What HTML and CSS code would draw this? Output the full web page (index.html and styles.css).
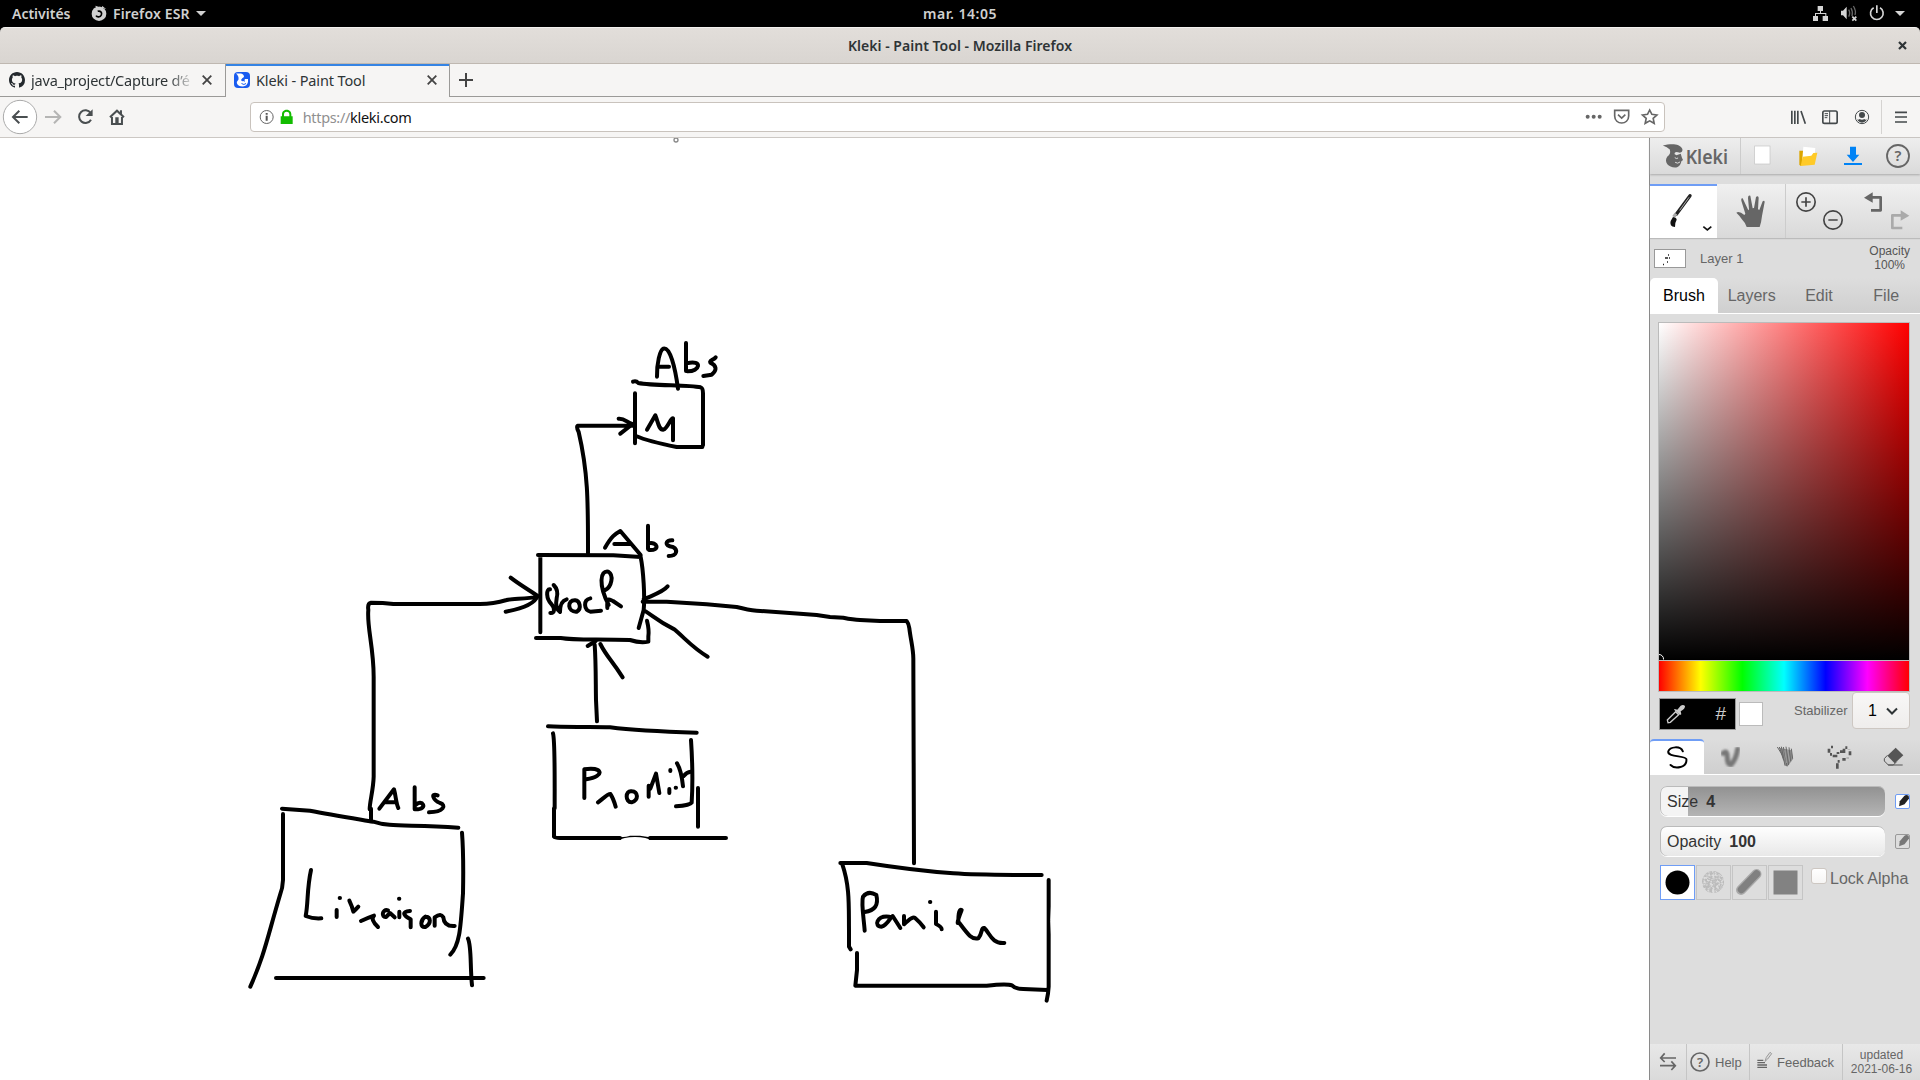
FILE: index.html
```html
<!DOCTYPE html>
<html lang="fr">
<head>
<meta charset="utf-8">
<title>Kleki - Paint Tool</title>
<link rel="stylesheet" href="styles.css">
</head>
<body>
<header class="topbar">
  <div class="topbar-left">
    <span class="activities">Activités</span>
    <svg class="fox" viewBox="273 15 48 50"><circle cx="297" cy="41" r="22" fill="#d0d0d0"/><path d="M272 14h50v9l-8 4-14-8-12 5-6-8-10 7z" fill="#000"/><path d="M286 17l4 12 11 1-8 7 1 6 11-1c-1 6-10 9-15 4 3 8 20 8 23-4 2-9-4-15-10-16l4-8 12 10" fill="#d0d0d0"/><path d="M293 34c8-3 14 4 11 11-3 7-13 7-16 2" fill="none" stroke="#000" stroke-width="5"/></svg>
    <span class="app">Firefox ESR</span><i class="caret"></i>
  </div>
  <span class="clock">mar. 14:05</span>
  <svg class="tray" viewBox="750 0 300 81" fill="#d5d5d5"><path d="M773 18h16v15h-6v6h16v9h5v15h-16V48h8v-6h-28v6h6v15h-15V48h6v-9h15v-6h-7z"/><path d="M843 32h6l11-12v38l-11-12h-6z"/><g fill="none" stroke="#666" stroke-width="4"><path d="M866 29q6 10 0 21M873 24q7 13 3 25M880 18q9 14 5 27"/></g><path d="M877 50l12 12M889 50l-12 12" stroke="#d5d5d5" stroke-width="5"/><g fill="none" stroke="#d5d5d5" stroke-width="5"><path d="M941 23a19 19 0 1 0 19 0M950.500 16v23"/></g><path d="M1005 33h30l-15 15z"/></svg>
</header>
<div class="titlebar"><span class="title">Kleki - Paint Tool - Mozilla Firefox</span>
  <svg class="winclose" viewBox="0 0 9 9"><path d="M1 1l7 7M8 1L1 8" stroke="#2e3436" stroke-width="2.200"/></svg>
</div>
<nav class="tabs">
  <div class="tab">
    <svg class="fav" viewBox="0 0 16 16"><path fill="#24292e" d="M8 0C3.580 0 0 3.580 0 8c0 3.540 2.290 6.530 5.470 7.590.4.070.55-.17.55-.38 0-.19-.01-.82-.01-1.490-2.010.37-2.530-.49-2.690-.94-.09-.23-.48-.94-.82-1.130-.28-.15-.68-.52-.01-.53.63-.01 1.080.58 1.230.82.72 1.210 1.870.87 2.330.66.07-.52.28-.87.51-1.070-1.780-.2-3.640-.89-3.640-3.950 0-.87.31-1.590.82-2.150-.08-.2-.36-1.020.08-2.120 0 0 .67-.21 2.200.82.640-.18 1.320-.27 2-.27s1.360.09 2 .27c1.530-1.040 2.200-.82 2.200-.82.440 1.100.160 1.920.080 2.120.510.560.820 1.270.820 2.150 0 3.070-1.870 3.750-3.650 3.950.290.250.540.730.540 1.480 0 1.070-.01 1.930-.01 2.200 0 .21.150.460.550.380A8 8 0 0 0 16 8c0-4.420-3.580-8-8-8z"/></svg>
    <span class="tab-label fade">java_project/Capture d’é</span>
    <svg class="x" viewBox="0 0 10 10"><path d="M.7.7l8.600 8.600M9.300.7L.7 9.300"/></svg>
  </div>
  <div class="tab active">
    <svg class="fav" viewBox="0 0 16 16"><rect width="16" height="16" rx="4" fill="#1a5cf0"/><path d="M2 1.500h5Q10 2 10 5q-2 1-3 3 1 2 3 1l1-2h3v3q-1 4-5 4.500-5 0-6-3-.5-2 1.500-4Q5 4 2 1.500z" fill="#fff"/><path d="M10.500 8.500v1M7.500 11.500q2.500 2 4.500 0" stroke="#1a5cf0" fill="none"/></svg>
    <span class="tab-label">Kleki - Paint Tool</span>
    <svg class="x" viewBox="0 0 10 10"><path d="M.7.7l8.600 8.600M9.300.7L.7 9.300"/></svg>
  </div>
  <div class="newtab"><svg class="plus" viewBox="0 0 14 14"><path d="M7 0v14M0 7h14"/></svg></div>
</nav>
<div class="navbar">
  <svg class="navicons" viewBox="0 291 400 120"><circle cx="60" cy="351" r="50" fill="#fff" stroke="#aaa" stroke-width="3"/><g fill="none" stroke="#4a4f51" stroke-width="6"><path d="M83 351H39M58 332l-19 19 19 19"/><path d="M135 351h44M162 332l19 19-19 19" stroke="#b5b5b4"/><path d="M272 339a19 19 0 1 0 1 20"/></g><path d="M278 328v20h-21z" fill="#4a4f51"/><path d="M330 352l21-20 21 20M336 351v21h30v-21" fill="none" stroke="#4a4f51" stroke-width="6"/><path d="M346 352h10v20h-10zM360 331h6v14h-6z" fill="#4a4f51"/></svg>
  <div class="urlbar">
    <svg class="urlicons" viewBox="775 328 110 48"><circle cx="801" cy="352" r="19.500" fill="none" stroke="#666" stroke-width="3"/><path d="M798 348h6v15h-6zM798 340h6v5h-6z" fill="#555"/><path d="M843 350h4v-6c0-18 28-18 28 0v6h4v23h-36zm10 0h16v-6c0-10-16-10-16 0z" fill="#12bc00"/></svg>
    <span class="url"><span class="scheme">https://</span>kleki.com</span>
    <svg class="urlact" viewBox="70 325 230 54"><g fill="#666"><circle cx="84" cy="351" r="6"/><circle cx="102" cy="351" r="6"/><circle cx="120" cy="351" r="6"/></g><g fill="none" stroke="#666" stroke-width="5"><path d="M165 332h42v17c0 28-42 28-42 0zM175 345l11 10 11-10"/><path d="M270 331l6.500 13 15 2-11 10 3 15-13.500-7.500-13.500 7.500 3-15-11-10 15-2z"/></g></svg>
  </div>
  <svg class="menuicons" viewBox="690 294 360 114"><g fill="none" stroke="#44494b" stroke-width="5"><path d="M695.500 332v40M704.500 332v40M713.500 332v40M723 333l13 38"/><rect x="788.500" y="333" width="43" height="37" rx="5"/><path d="M809 333v38" stroke-width="3"/><path d="M794 341h10M794 347h10M794 353h8" stroke-width="3"/><circle cx="906" cy="351" r="20" stroke-width="3"/><path d="M1005 337h36M1005 351h36M1005 366h36"/></g><circle cx="906" cy="345" r="9" fill="#44494b"/><path d="M891 358q4 3 8-1 7 4 14 0 4 4 8 1-6 10-15 10t-15-10z" fill="#44494b"/><path d="M964.500 300v102" stroke="#d5d3d1" stroke-width="3"/></svg>
</div>
<main class="main">
  <svg class="canvas" viewBox="0 138 1649 942" fill="none" stroke="#000" stroke-width="12" stroke-linecap="round" stroke-linejoin="round">
    <circle cx="676" cy="140" r="2" stroke="#888" stroke-width="1.300"/>
    <!-- M and Stock boxes -->
    <g transform="translate(530 330) scale(.33333)">
      <path d="M381 140C380 100 390 60 400 56C420 50 435 110 444 176M387 110h30M468 39v84M470 100C520 88 510 125 472 124M557 82C550 90 537 92 541 98C560 107 562 120 545 134L520 138"/>
      <path d="M309 155Q318 151 325 159C370 168 470 164 512 172Q519 174 519 190V346M315 190V340M318 318C350 332 400 343 440 351H517M351 299L376 256C384 275 386 300 400 299C412 296 423 262 429 265V331"/>
      <path d="M266 266C285 264 293 281 308 282L271 311M308 287H143Q138 290 146 306C175 430 174 520 174 670"/>
      <path d="M225 653C245 618 255 612 271 603L332 675M253 642h48M354 587v70M356 640C382 634 392 663 357 660M427 631C405 630 402 648 429 651C444 659 442 678 416 678"/>
      <path d="M24 675L250 676 332 681C340 720 345 800 341 840L326 894M31 682V907M18 924H92C130 931 200 927 300 930Q330 940 355 935V920Q358 900 351 872"/>
      <path d="M60 778C48 776 48 806 64 822C76 836 74 850 61 849M71 765C82 776 84 790 80 805C76 825 80 838 90 846C90 825 94 812 110 808M136 811C110 809 112 847 140 845C157 835 148 812 136 811M181 805C158 810 162 840 181 845L213 842M236 825C205 765 210 720 235 725C252 735 245 770 226 780M232 834C230 800 236 808 249 813L273 829"/>
      <path d="M413 769C400 786 370 795 341 808M347 844C375 862 380 872 433 898C470 930 490 955 533 980M194 944C198 1000 197 1060 198 1110L201 1174M197 933L173 948M211 942C230 980 245 990 278 1042"/>
    </g>
    <!-- Livraison box -->
    <g transform="translate(240 560) scale(.33333)">
      <path d="M812 53C840 75 860 85 893 108Q880 140 797 155M893 110C860 118 815 115 800 120Q760 132 720 132H460Q430 128 393 128Q382 130 385 150C380 200 401 260 401 350V650C400 690 389 725 389 748"/>
      <path d="M393 746V782M126 746L210 752C270 764 340 775 400 785C450 802 500 793 655 803M129 762V960Q128 985 120 1005C80 1140 75 1180 31 1280M108 1254H731M666 818C670 870 670 950 669 1000C662 1100 660 1155 631 1184M684 1136C695 1160 690 1220 696 1276"/>
      <path d="M418 746L462 688C468 710 468 730 475 744M435 727h35M524 682V748M527 735C545 714 568 748 527 748M593 706C570 698 580 721 600 729C620 735 612 756 567 757"/>
      <path d="M213 930C200 990 205 1030 197 1068Q220 1077 244 1075M290 1050V1071M299 1014h1M328 1022Q337 1041 340 1055Q348 1048 355 1040M363 1083Q380 1075 402 1067Q390 1078 414 1101M444 1051C425 1046 424 1074 438 1071L450 1059L464 1072M478 1055V1072M477 1016h1M510 1053C482 1055 492 1068 512 1078V1102M556 1070C540 1080 540 1104 556 1101C575 1090 573 1070 556 1070M584 1097V1072C598 1062 605 1064 610 1072Q612 1100 644 1098"/>
    </g>
    <!-- Produit box -->
    <g transform="translate(530 640) scale(.33333)">
      <path d="M54 259C120 263 190 259 240 262C300 270 350 274 500 278M69 280C75 300 74 370 74 505H72V590Q75 594 90 594H270M360 594H588M483 300C487 360 488 440 485 488Q480 496 438 499M504 444V560"/>
      <path d="M270 592Q292 590 300 587H330Q345 589 360 592V600H270Z" fill="#000" stroke="none"/>
      <ellipse cx="315" cy="601" rx="43" ry="10" fill="#fff" stroke="none"/>
      <path d="M163 474V388C215 378 230 408 169 418M204 487C220 475 235 460 241 462Q250 475 257 500M305 454C285 450 285 488 305 487C327 482 325 453 305 454M356 470V437L361 446 378 401 388 459M421 390v3M418 447v12M437 443h1M441 370C453 390 456 410 459 439M461 408Q470 396 482 395"/>
    </g>
    <!-- Panier connector -->
    <g transform="translate(640 560) scale(.33333)">
      <path d="M8 125H80L200 133 290 141Q325 150 350 152L480 161 530 165 570 171 610 173Q640 179 660 180L720 183H800Q806 190 808 205C812 240 821 270 820 300L822 910"/>
    </g>
    <!-- Panier box -->
    <g transform="translate(820 840) scale(.33333)">
      <path d="M61 69H140C210 80 320 94 400 100C480 106 550 104 665 105M67 73C90 140 86 200 87 270V320L92 328M111 339V390L106 437H500Q560 430 576 436Q586 447 610 447L682 450M686 120V440Q685 460 680 482"/>
      <path d="M134 272C132 240 123 190 129 170Q145 150 169 165Q180 210 134 216M208 230C170 225 160 260 185 260C205 252 210 232 218 228L241 264M252 228V253Q280 225 286 235Q298 245 311 262M330 186h1M348 215V252Q365 260 365 268M413 249Q413 240 425 210Q415 205 415 245C445 285 455 300 475 295C490 275 482 262 493 264C510 280 515 312 553 309"/>
    </g>
    <path d="M1051.500 906Q1050 920 1051.500 935" stroke="#fff" stroke-width="1"/>
  </svg>
  <aside class="panel">
    <div class="head">
      <svg class="logo" viewBox="30 24 271 108"><path d="M69 46C90 41 120 38 128 57Q130 66 120 68Q104 63 104 72L110 76 123 71 127 84 130 90 125 94Q123 108 112 112C90 116 70 98 82 80Q94 72 90 58 82 50 69 46z" fill="#666"/><path d="M105 83q6 5 10 1M106 97q8 6 15-1" fill="none" stroke="#ddd" stroke-width="3"/><text x="138" y="101" font-size="58" textLength="128" lengthAdjust="spacingAndGlyphs" class="logotext">Kleki</text></svg>
      <svg class="fileicons" viewBox="303 24 537 108"><rect x="344" y="48" width="46" height="54" fill="#fff" stroke="#c4c4c4" stroke-width="2"/><path d="M478 62h12v40l-8 6-4-4z" fill="#dba500"/><path d="M490 50l36 4-4 45-36 2z" fill="#fff"/><path d="M488 80l26-3 6-8 12-1-8 36-42 4z" fill="#ffca28"/><path d="M630 50h18v24h10l-19 22-19-22h10z" fill="#0083f5"/><path d="M612 102h54" stroke="#0083f5" stroke-width="6"/><circle cx="774" cy="78" r="33" fill="none" stroke="#666" stroke-width="5.500"/><text x="774" y="94" text-anchor="middle" font-size="45" class="q">?</text></svg>
    </div>
    <div class="tools">
      <div class="brushtool"><svg class="fill" viewBox="30 168 201 156"><path d="M150 197L109 253" stroke="#222" stroke-width="10" stroke-linecap="round"/><path d="M147 202l-28 39" stroke="#aaa" stroke-width="3"/><path d="M108 251l-7 10" stroke="#aaa" stroke-width="10"/><path d="M99 261q11 2 11 8-6 10-5 22-18-1-13-18z" fill="#111"/><path d="M190 290l12 10 12-10" fill="none" stroke="#111" stroke-width="5"/></svg></div>
      <svg class="handtool" viewBox="231 162 204 162"><path d="M320 291q-4-13-15-24-8-12-16-19 8-7 24 7l3-4-12-39q-2-8 4-7l17 36 2-3-3-34q0-9 7-7l7 38 4-1 6-33q6-5 8 2l-2 35 4 2 10-26q5-5 6 2l-8 42q-2 19-7 33z" fill="#666"/></svg>
      <svg class="viewtools" viewBox="438 162 402 162"><g fill="none" stroke="#444" stroke-width="5"><circle cx="498" cy="216" r="27.500"/><circle cx="579" cy="270" r="27.500"/><path d="M484 216h28M498 202v28M565 270h28"/></g><path d="M692 202h30v39h-29" fill="none" stroke="#666" stroke-width="8" stroke-linejoin="round"/><path d="M672 203l26-16v31z" fill="#666"/><path d="M788 256h-31v38h30" fill="none" stroke="#aaa" stroke-width="8" stroke-linejoin="round"/><path d="M808 257l-26-16v31z" fill="#aaa"/></svg>
    </div>
    <div class="layer">
      <svg class="thumb" viewBox="0 0 30 17"><path d="M10 8h3M13 5h1M14 8h1M12 12h1M8 14.500h1" stroke="#222" stroke-width="1.300"/></svg>
      <span class="layername">Layer 1</span>
      <span class="layeropacity">Opacity<br>100%</span>
    </div>
    <div class="ptabs"><span class="ptab on">Brush</span><span class="ptab">Layers</span><span class="ptab">Edit</span><span class="ptab">File</span></div>
    <div class="picker"><div class="sv"><svg class="svmark" viewBox="0 0 6 7"><path d="M0 1.500A4.500 4.500 0 0 1 4.500 6.500" fill="none" stroke="#fff"/></svg></div><div class="hue"></div></div>
    <div class="colorrow">
      <div class="black"><svg class="dropper" viewBox="78 192 60 60"><path d="M84 248l-2-8 25-25 9 9-25 23z" fill="none" stroke="#ccc" stroke-width="4"/><path d="M104 207l8 2 10-12q8-5 13 1 1 8-13 16l2 9-4 2-18-16z" fill="#ccc"/></svg><span class="hash">#</span></div>
      <div class="white"></div>
      <span class="stab">Stabilizer</span>
      <div class="select">1<svg class="chev" viewBox="0 0 12 8"><path d="M1 1.500l5 5 5-5" fill="none" stroke="#2e3436" stroke-width="2"/></svg></div>
    </div>
    <div class="btabs">
      <div class="btab on"><svg class="fill" viewBox="30 301 162 102"><path d="M129 333C122 315 89 318 84 333C80 351 137 346 140 357C143 384 105 389 91 375" fill="none" stroke="#000" stroke-width="6" stroke-linecap="round"/></svg></div>
      <svg class="bicons" viewBox="192 298 648 105"><defs><filter id="soft"><feGaussianBlur stdDeviation="2.500"/></filter></defs><path d="M249 341C262 330 262 346 262 358Q263 374 273 375 288 360 293 328" fill="none" stroke="#777" stroke-width="15" stroke-linecap="round" filter="url(#soft)"/><path d="M418 324l36 8 5 26-16 22-7-2-9-28z" fill="#8c8c8c"/><g stroke="#686868" stroke-width="3" fill="none"><path d="M412 322l16 26M418 322l13 40M424 321l11 57M430 322l11 58M438 321l8 55M447 323l5 42M454 327l4 30"/></g><path d="M434 332l6 38M443 330l6 36" stroke="#aaa" stroke-width="2" fill="none"/><path d="M573 322h6M567 327v12M570 344h6M578 349h14M594 343v-6M600 336h12v-9M616 324h6M627 330v1M630 335v12M623 354v2M617 359h-10M599 365h-6M592 371v16" fill="none" stroke="#555" stroke-width="8"/><path d="M767 324l23 23-26 24-22-23z" fill="#555"/><path d="M742 347l-9 10v7l12 12h15l10-10M744 376h44" fill="none" stroke="#555" stroke-width="3"/></svg>
    </div>
    <div class="sliders">
      <div class="sliderrow"><div class="slider size"><span>Size</span><b>4</b></div><div class="pen on"><svg class="pensvg" viewBox="768 463 38 38"><path d="M777 496l2-15 13-15q5-5 13-1l1 8-13 17z" fill="#222"/></svg></div></div>
      <div class="sliderrow"><div class="slider"><span>Opacity</span><b>100</b></div><div class="pen"><svg class="pensvg" viewBox="768 463 38 38"><path d="M777 496l2-15 13-15q5-5 13-1l1 8-13 17z" fill="#777"/></svg></div></div>
      <div class="alphas">
        <div class="alpha on"><svg class="fill" viewBox="0 0 33 33"><circle cx="16.500" cy="16.500" r="12" fill="#000"/></svg></div>
        <div class="alpha"><svg class="fill" viewBox="0 0 33 33"><defs><filter id="grain"><feTurbulence type="fractalNoise" baseFrequency=".45" numOctaves="2" seed="3"/><feColorMatrix values="0 0 0 0 .5 0 0 0 0 .5 0 0 0 0 .5 4 0 0 0 -1.300"/><feComposite in2="SourceGraphic" operator="in"/></filter></defs><circle cx="16" cy="16" r="11" fill="#888" filter="url(#grain)"/></svg></div>
        <div class="alpha"><svg class="fill" viewBox="0 0 33 33"><path d="M8 24L23.500 8" stroke="#aaa" stroke-width="10" stroke-linecap="round"/><path d="M8.500 23.500L23.500 8" stroke="#808080" stroke-width="7.500" stroke-linecap="round"/></svg></div>
        <div class="alpha"><svg class="fill" viewBox="0 0 33 33"><rect x="4.500" y="4.500" width="24" height="24" fill="#828282"/></svg></div>
        <div class="check"></div><span class="lock">Lock Alpha</span>
      </div>
    </div>
    <div class="foot">
      <svg class="swap" viewBox="30 42 108 108"><path d="M108 84H64M74 70L62 84l12 12M60 107h44M94 94l12 13-12 13" fill="none" stroke="#666" stroke-width="5"/></svg>
      <div class="help"><svg class="helpicon" viewBox="150 66 60 60"><circle cx="180" cy="96" r="27" fill="none" stroke="#666" stroke-width="5"/><text x="180" y="110" text-anchor="middle" font-size="40" class="q">?</text></svg>Help</div>
      <div class="feedback"><svg class="fbicon" viewBox="350 66 48 54"><path d="M351 94h18M351 101h23M351 108h29M351 115h29" stroke="#666" stroke-width="4"/><path d="M374 97l4-12 11-15 5 4-12 16z" fill="#ddd" stroke="#999" stroke-width="3"/></svg>Feedback</div>
      <div class="updated">updated<br>2021-06-16</div>
    </div>
  </aside>
</main>
</body>
</html>
```
FILE: styles.css
```css
* { box-sizing: border-box; }
body { margin: 0; width: 1920px; height: 1080px; overflow: hidden; display: flex; flex-direction: column; background: #000; font: 14.67px "Noto Sans", sans-serif; color: #2e3436; }
svg { display: block; flex: none; }
.topbar { height: 27px; flex: none; display: grid; grid-template-columns: 1fr auto 1fr; align-items: center; background: #000; color: #d0d0d0; font-weight: 600; font-size: 14px; line-height: 27px; }
.topbar-left { display: flex; align-items: center; padding-left: 12px; }
.activities { width: 79px; letter-spacing: 0; }
.fox { width: 16px; height: 16.700px; margin-right: 6px; }
.app { width: 83px; letter-spacing: .150px; white-space: nowrap; }
.caret { border: 5px solid transparent; border-top-color: #d0d0d0; border-bottom: 0; }
.clock { letter-spacing: .500px; }
.tray { width: 100px; height: 27px; justify-self: end; margin-right: 10px; }
.titlebar { height: 37px; flex: none; display: grid; grid-template-columns: 1fr auto 1fr; align-items: center; background: linear-gradient(#e2deda, #d9d5d1); border-top: 1px solid #f3f1ef; border-bottom: 1px solid #bfb8b1; border-radius: 5px 5px 0 0; font-weight: 600; font-size: 14px; }
.title { grid-column: 2; letter-spacing: .030px; }
.winclose { width: 9px; height: 9px; justify-self: end; margin-right: 13px; }
.tabs { height: 33px; flex: none; display: flex; background: #f6f5f4; box-shadow: inset 0 -1px #9b9a98; }
.tab { width: 225px; height: 33px; display: flex; align-items: center; padding: 0 13px 1px 9px; flex: none; }
.tab.active { width: 225px; background: #f6f5f4; border: solid #9b9a98; border-width: 0 1px; box-shadow: inset 0 2px #3584e4; padding: 0 12px 1px 8px; }
.fav { width: 16px; height: 16px; margin-right: 6px; }
.tab-label { flex: 1; overflow: hidden; white-space: nowrap; font-size: 14.500px; letter-spacing: -.120px; line-height: 30px; }
.fade { letter-spacing: -.200px; -webkit-mask-image: linear-gradient(90deg, #000 84%, transparent 100%); mask-image: linear-gradient(90deg, #000 84%, transparent 100%); }
.x { width: 10px; height: 10px; margin-left: 7px; margin-right: 0; fill: none; stroke: #444; stroke-width: 1.800; }
.newtab { display: flex; align-items: center; padding: 0 0 1px 9px; }
.plus { width: 14px; height: 14px; fill: none; stroke: #444; stroke-width: 2; }
.navbar { height: 41px; flex: none; display: flex; align-items: center; background: #f6f5f4; border-bottom: 1px solid #ccc8c4; }
.navicons { width: 133.300px; height: 40px; }
.urlbar { width: 1415px; height: 30px; margin-left: 116.700px; display: flex; align-items: center; background: #fff; border: 1px solid #c9c3bd; border-radius: 4px; }
.urlicons { width: 36.700px; height: 16px; margin-left: 7px; }
.url { flex: 1; color: #111; margin-left: 8px; font-size: 14.500px; letter-spacing: -.320px; }
.scheme { color: #909090; }
.urlact { width: 76.700px; height: 18px; margin-right: 4px; }
.menuicons { width: 120px; height: 38px; margin-left: 125px; }
.main { flex: 1; display: flex; min-height: 0; background: #fff; }
.canvas { width: 1649px; height: 942px; }
.panel { width: 271px; height: 942px; border-left: 1px solid #8a8a8a; background: #ddd; display: flex; flex-direction: column; font-family: "Liberation Sans", Arial, sans-serif; color: #666; }
.fill { width: 100%; height: 100%; }
.head { height: 36px; display: flex; background: linear-gradient(#eee, #dadada); box-shadow: 0 1px 2px #aaa; flex: none; }
.logo { width: 90.500px; height: 36px; border-right: 1px solid #ccc; }
.logotext { font-family: "Noto Sans", sans-serif; font-weight: 600; fill: #666; }
.q { font-family: "Noto Sans", sans-serif; font-weight: 600; fill: #666; }
.fileicons { width: 179px; height: 36px; }
.tools { height: 54px; margin-top: 10px; display: flex; background: linear-gradient(#f0f0f0, #d9d9d9); box-shadow: 0 1px 1px #bbb; flex: none; }
.brushtool { width: 67px; height: 54px; background: #fff; border-top: 2px solid #6f9df5; }
.handtool { width: 69px; height: 54px; border-right: 1px solid #ccc; }
.viewtools { width: 134px; height: 54px; }
.layer { height: 40px; display: flex; align-items: center; padding: 0 10px 0 4px; flex: none; font-size: 13px; }
.thumb { width: 32px; height: 19px; background: #fff; border: 1px solid #999; }
.layername { margin-left: 14px; flex: 1; }
.layeropacity { font-size: 12px; line-height: 14px; text-align: center; color: #555; }
.ptabs { height: 36px; display: flex; background: linear-gradient(#ddd, #cfcfcf); border-bottom: 1px solid #fff; font-size: 16px; line-height: 35px; text-align: center; flex: none; }
.ptab { width: 67.300px; }
.ptab.on { width: 68px; background: #fff; color: #000; border-radius: 5px 5px 0 0; }
.picker { margin: 8px 10px 0 8px; width: 252px; height: 370px; border: 1px solid #bbb; flex: none; }
.sv { height: 338px; background: linear-gradient(transparent, #000), linear-gradient(90deg, #fff, #f00); border-bottom: 1px solid #bbb; display: flex; align-items: flex-end; }
.svmark { width: 6px; height: 7px; }
.hue { height: 30px; background: linear-gradient(90deg, red, #ff0, lime, cyan, blue, magenta, red); }
.colorrow { height: 47px; display: flex; padding: 0 10px 0 9px; align-items: flex-start; flex: none; }
.black { width: 77px; height: 32px; margin-top: 6px; background: #000; border: 1px solid #999; display: flex; align-items: center; justify-content: space-between; padding: 0 9px 0 6px; color: #ccc; }
.dropper { width: 20px; height: 20px; }
.hash { font-size: 19px; }
.white { width: 24px; height: 24px; margin: 10px 0 0 3px; background: #fff; border: 1px solid #bbb; }
.stab { font-size: 13px; margin: 11px 0 0 31px; width: 58px; }
.select { width: 58px; height: 37px; border: 1px solid #cdc7c2; border-radius: 4px; background: linear-gradient(#f8f7f6, #efedec); color: #000; display: flex; align-items: center; padding: 0 11px 0 15px; justify-content: space-between; font-size: 16px; }
.chev { width: 12px; height: 8px; }
.btabs { height: 36px; display: flex; background: linear-gradient(#ddd, #cfcfcf); border-bottom: 1px solid #fff; flex: none; }
.btab { width: 54px; background: #fff; border-top: 2px solid #6f9df5; border-radius: 4px 4px 0 0; }
.bicons { width: 216px; height: 35px; }
.sliders { padding: 11px 10px 0; display: flex; flex-direction: column; gap: 10px; }
.sliderrow { display: flex; align-items: center; justify-content: space-between; height: 30px; }
.slider { width: 225px; height: 30px; border-radius: 7px; background: linear-gradient(#fff, #e8e8e8); box-shadow: inset 0 1px #bbb, inset 1px 0 #bbb, 0 1px #fff; display: flex; align-items: center; padding: 1px 0 0 7px; gap: 8px; color: #333; font-size: 16px; }
.slider.size { background: linear-gradient(90deg, #f4f4f4 28px, transparent 28px), linear-gradient(#919191, #b4b4b4); }
.pen { width: 15px; height: 15px; border: 1px solid #999; border-radius: 2px; }
.pen.on { border-color: #6f9df5; background: #fff; }
.pensvg { width: 13px; height: 13px; }
.alphas { display: flex; align-items: flex-start; margin-top: -1px; }
.alpha { width: 35px; height: 35px; border: 1px solid #c5c5c5; margin-right: 1px; flex: none; }
.alpha.on { background: #fff; border-color: #6f9df5; }
.check { width: 16px; height: 16px; margin: 3px 3px 0 7px; background: linear-gradient(#fff, #f6f5f4); border: 1px solid #cdc7c2; border-radius: 3px; flex: none; }
.lock { font-size: 16px; line-height: 18px; margin-top: 5px; white-space: nowrap; }
.foot { height: 36px; margin-top: auto; display: flex; background: linear-gradient(#e8e8e8, #dadada); font-size: 13px; flex: none; }
.foot > * { border-right: 1px solid #c5c5c5; }
.swap { width: 37px; height: 36px; }
.help { width: 63px; display: flex; align-items: center; padding-left: 3px; gap: 5px; }
.helpicon { width: 20px; height: 20px; }
.feedback { width: 93px; display: flex; align-items: center; padding-left: 7px; gap: 4px; }
.fbicon { width: 16px; height: 18px; margin-bottom: 4px; }
.foot .updated { flex: 1; border: 0; font-size: 12px; line-height: 14px; text-align: center; padding-top: 4px; }
```
